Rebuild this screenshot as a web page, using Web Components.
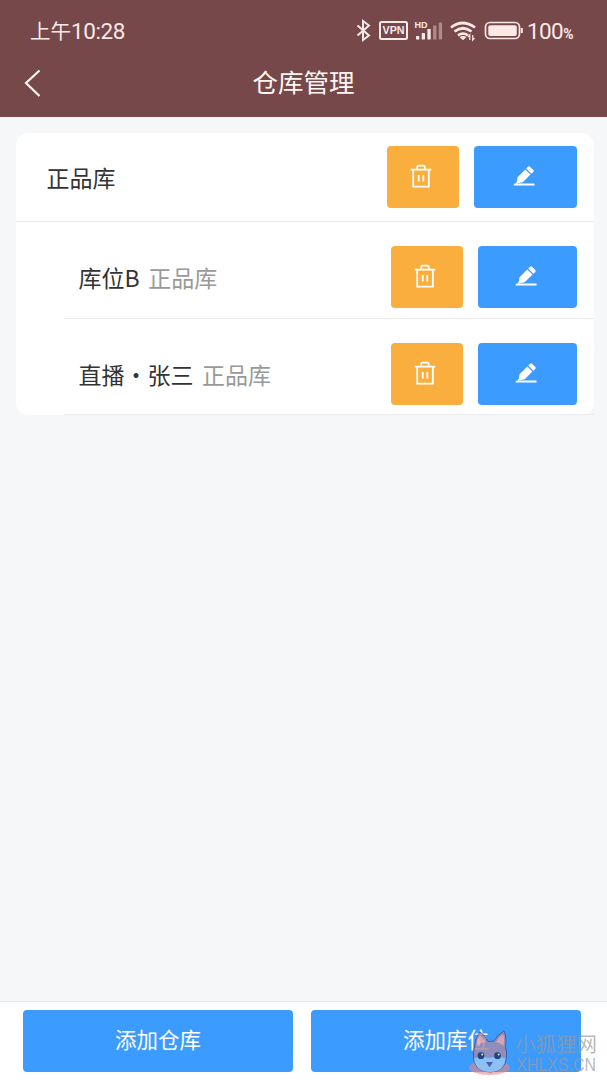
<!DOCTYPE html>
<html lang="zh-CN">
<head>
<meta charset="utf-8">
<meta name="viewport" content="width=device-width, initial-scale=1">
<title>仓库管理</title>
<style>
  html, body {
    height: 100%;
    margin: 0;
  }

  body {
    font-family: "Noto Sans CJK SC", sans-serif;
    overflow: hidden;
  }
</style>
</head>
<body>
<warehouse-app></warehouse-app>

<template id="status-bar">
  <style>
    :host {
      display: flex;
      align-items: center;
      box-sizing: border-box;
      height: 61px;
      padding: 0 32px 0 30px;
      color: #fbe9e7;
      font-size: 20.5px;
      line-height: 30px;
    }

    .time {
      flex: 1;
    }

    .digits {
      font-family: Roboto, sans-serif;
      font-size: 22.5px;
      letter-spacing: -0.4px;
    }

    svg {
      display: block;
      flex: none;
    }

    .battery {
      width: 48px;
      margin-left: 3px;
      padding-top: 3px;
      font-family: Roboto, sans-serif;
      font-size: 22.5px;
      letter-spacing: -0.6px;
      white-space: nowrap;
    }

    small {
      font-size: 14px;
      font-weight: 700;
    }
  </style>
  <span class="time">上午<span class="digits">10:28</span></span>
  <svg width="168" height="24" viewBox="356 19 168 24" fill="none" stroke="#fbe9e7">
    <path d="M357.5 25.5 369 35.5l-6 4.5V21l6 4.5-11.5 10" stroke-width="2"/>
    <rect x="380" y="22" width="27" height="17" rx="1.5" stroke-width="2"/>
    <text x="382.5" y="34.3" font-family="Liberation Sans" font-size="10.5" font-weight="700" textLength="22" lengthAdjust="spacingAndGlyphs" fill="#fbe9e7" stroke="none">VPN</text>
    <text x="414.5" y="28.3" font-family="Liberation Sans" font-size="9" font-weight="700" textLength="13" lengthAdjust="spacingAndGlyphs" fill="#fbe9e7" stroke="none">HD</text>
    <g fill="#fbe9e7" stroke="none">
      <rect x="416" y="36" width="3.3" height="3.5" rx=".6"/>
      <rect x="421.7" y="33" width="3.3" height="6.5" rx=".6"/>
      <rect x="427.4" y="29" width="3.3" height="10.5" rx=".6"/>
      <rect x="433.1" y="25.5" width="3.3" height="14" rx=".6" opacity=".42"/>
      <rect x="438.8" y="22.5" width="3.3" height="17" rx=".6" opacity=".42"/>
    </g>
    <path d="M451 27.5q11.5-9 24 0M454.5 31.5q8.500-6.500 17 0M458 35.300q5-3.500 10 0" stroke-width="2.700"/>
    <path d="M459.500 37q3.500-2 7 0l-3.500 3.300z" fill="#fbe9e7" stroke="none"/>
    <path d="M469.800 40v-5l-1.700 2M472.700 35v5l1.700-2" stroke-width="1.200"/>
    <rect x="485.500" y="22.500" width="34" height="16" rx="4.500" stroke-width="1.700"/>
    <rect x="488.300" y="25.200" width="28.500" height="10.700" rx="2" fill="#fbe9e7" stroke="none"/>
    <path d="M521.800 28v5" stroke-width="2"/>
  </svg>
  <span class="battery">100<small>%</small></span>
</template>

<template id="nav-bar">
  <style>
    :host {
      display: grid;
      grid-template-columns: 60px 1fr 60px;
      align-items: center;
      height: 43px;
      padding-bottom: 13px;
      color: #fff5f2;
    }

    svg {
      display: block;
      margin-left: 24px;
    }

    h1 {
      margin: 0;
      padding-bottom: 4px;
      font-size: 25.5px;
      font-weight: 400;
      line-height: 39px;
      text-align: center;
    }
  </style>
  <svg width="18" height="28" viewBox="0 0 18 28" fill="none" stroke="currentColor" stroke-width="2.2">
    <path d="M15.500 1.500 2 14l13.500 13"/>
  </svg>
  <h1><slot></slot></h1>
</template>

<template id="app-button">
  <style>
    :host {
      display: flex;
      align-items: center;
      justify-content: center;
      box-sizing: border-box;
      height: 62px;
      border-radius: 4px;
      background: #3c9bff;
      color: #fff;
      font-size: 21.500px;
    }

    :host([type="warning"]) {
      background: #f9ae3d;
    }
  </style>
  <slot></slot>
</template>

<template id="list-row">
  <style>
    :host {
      display: flex;
      align-items: center;
      box-sizing: border-box;
      height: 97px;
      margin-left: 48px;
      padding: 14px 17.5px 0 15px;
      border-bottom: 1px solid #e8eaec;
      color: #333;
      font-size: 23px;
      --edit-width: 98.5px;
    }

    :host([parent]) {
      height: 89px;
      margin-left: 0;
      padding: 0 17.5px 1px 31px;
      --edit-width: 102.5px;
    }

    :host(:last-child) {
      height: 96px;
      padding-top: 15px;
    }

    .name {
      flex: 1;
      white-space: nowrap;
    }

    .note {
      margin-left: 8.5px;
      color: #999;
    }

    .note:empty {
      display: none;
    }

    app-button {
      flex: none;
      width: 72.5px;
    }

    .edit {
      width: var(--edit-width);
      margin-left: 15px;
    }

    svg {
      display: block;
      position: relative;
      top: -1px;
      left: -1.5px;
    }
  </style>
  <div class="name"><slot></slot><span class="note"></span></div>
  <app-button type="warning">
    <svg width="22" height="24" viewBox="0 0 22 24" fill="none" stroke="#fff" stroke-width="1.800">
      <path d="M.7 5.700h20.600M3.200 5.700v17h15.600v-17M7.200 5.500V3.200q0-1.500 1.500-1.500h4.600q1.500 0 1.500 1.500v2.300M8.700 11v6.500M13.300 11v6.500"/>
    </svg>
  </app-button>
  <app-button class="edit">
    <svg width="22" height="20" viewBox="0 0 22 20" fill="#fff">
      <path d="M12.300 3.400l5.200 5.200-7.800 7.700-7 1.500q1.600-2 1.800-6.500zM13.200 2.500 15 .7q1-.9 2 0l3.300 3.300q.9 1 0 1.900l-1.900 1.800z"/>
      <path d="M1.500 17.500h20v1.900H.4z"/>
    </svg>
  </app-button>
</template>

<template id="site-mark">
  <style>
    :host {
      display: block;
      width: 140px;
      height: 50px;
    }

    svg {
      display: block;
    }
  </style>
  <svg width="140" height="50" viewBox="467 1028 140 50">
    <ellipse cx="489.500" cy="1067.500" rx="20.500" ry="7.500" fill="#e98787" opacity=".6"/>
    <g stroke="#4b5286" stroke-width="1" opacity=".85">
      <path d="M474.500 1047Q475.500 1037 480 1032q5 3 8 9.500 2.500-.5 5.500 0 4-7 10.500-10.500 3 6 1.500 16.500 1.500 4 1 10-1.500 14.500-16.500 14.500t-16.500-14.500q-.5-6 1-10.500z" fill="#a08bae"/>
      <path d="M476.500 1045q.5-6 3.500-10 3.500 3 5 7-5 1-7 4zM496 1042q3-5 7-8 2 5 .5 12-3-3-7.500-4z" fill="#f0a7a6" stroke="none"/>
      <path d="M474 1058.500q8-2.500 15.500-.5 8-2 16 .5-1.500 13.500-15.500 13.500t-16-13.500z" fill="#8acaff" stroke="none"/>
    </g>
    <g fill="#27457b">
      <circle cx="481" cy="1055.700" r="3.400"/>
      <circle cx="497.500" cy="1055.700" r="3.400"/>
      <path d="M486 1062h7l-3.500 5.300z" fill="#48639f"/>
    </g>
    <circle cx="482.200" cy="1054.500" r="1" fill="#cfe6ff"/>
    <circle cx="498.700" cy="1054.500" r="1" fill="#cfe6ff"/>
    <g fill="#999" fill-opacity=".7">
      <text x="515" y="1051.500" font-family="Liberation Sans, Noto Sans CJK SC, sans-serif" font-size="20.500" textLength="82">小狐狸网</text>
      <text x="516" y="1070.500" font-family="Liberation Sans, sans-serif" font-size="17.500" textLength="80" lengthAdjust="spacingAndGlyphs">XHLXS.CN</text>
    </g>
  </svg>
</template>

<template id="warehouse-app">
  <style>
    :host {
      display: flex;
      flex-direction: column;
      position: relative;
      height: 100%;
      background: #f5f7f9;
    }

    header {
      flex: none;
      height: 117px;
      background: #76484a;
    }

    main {
      flex: 1;
      padding: 16px 13px 0 15.5px;
    }

    section {
      border-radius: 12px;
      background: #fefffe;
    }

    footer {
      display: flex;
      gap: 18px;
      box-sizing: border-box;
      height: 79px;
      padding: 7.5px 26px 0 23px;
      border-top: 1px solid #e3e6ea;
      background: #fff;
    }

    footer app-button {
      flex: 1;
      padding-bottom: 5px;
    }

    site-mark {
      position: absolute;
      right: 0;
      bottom: 2px;
    }
  </style>
  <header>
    <status-bar></status-bar>
    <nav-bar>仓库管理</nav-bar>
  </header>
  <main>
    <section>
      <list-row parent>正品库</list-row>
      <list-row note="正品库">库位B</list-row>
      <list-row note="正品库">直播・张三</list-row>
    </section>
  </main>
  <footer>
    <app-button>添加仓库</app-button>
    <app-button>添加库位</app-button>
  </footer>
  <site-mark></site-mark>
</template>

<script>
  /**
   * Base element that renders the template with the same id as its tag name.
   */
  class TemplateElement extends HTMLElement {
    constructor () {
      super()

      const template = document.getElementById(this.localName)
      this.attachShadow({ mode: 'open' }).appendChild(template.content.cloneNode(true))
    }
  }

  customElements.define('app-button', class extends TemplateElement {})
  customElements.define('status-bar', class extends TemplateElement {})
  customElements.define('nav-bar', class extends TemplateElement {})
  customElements.define('site-mark', class extends TemplateElement {})

  customElements.define('list-row',
    /**
     * Represents a warehouse or one of its locations.
     */
    class extends TemplateElement {
      /**
       * Shows the name of the warehouse that the location belongs to.
       */
      connectedCallback () {
        this.shadowRoot.querySelector('.note').textContent = this.getAttribute('note') || ''
      }
    }
  )

  customElements.define('warehouse-app', class extends TemplateElement {})
</script>
</body>
</html>
